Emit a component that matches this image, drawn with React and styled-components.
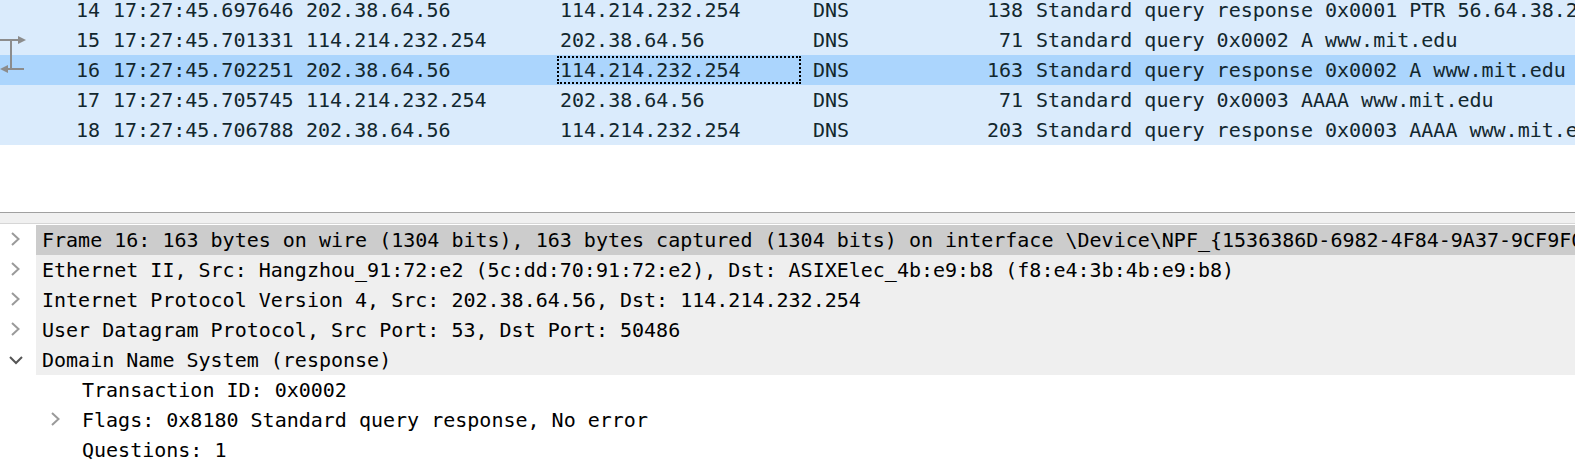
import React from "react";
import styled, { createGlobalStyle } from "styled-components";

const GlobalStyle = createGlobalStyle`
    body {
        margin: 0;
        background: #ffffff;
        font-family: "DejaVu Sans Mono", "Liberation Mono", monospace;
    }
`

const Window = styled.div`
    width: 1575px;
    height: 469px;
    overflow: hidden;
    background: #ffffff;
`

const PacketPane = styled.div`
    height: 212px;
    overflow: hidden;
    background: #ffffff;
`

const PacketScroll = styled.div`
    margin-top: -5px;
`

const PacketRow = styled.div`
    display: flex;
    height: 30px;
    line-height: 30px;
    font-size: 20px;
    color: #12272e;
    white-space: nowrap;
    background: ${p => p.$selected ? "#abd5fd" : "#daebfc"};
`

const Cell = styled.div`
    position: relative;
    flex: ${p => p.$w ? `0 0 ${p.$w}px` : "1 1 auto"};
    box-sizing: border-box;
    padding-left: ${p => p.$pl || 0}px;
    padding-right: ${p => p.$pr || 0}px;
    text-align: ${p => p.$align || "left"};
    overflow: hidden;
    &::after {
        content: "";
        display: ${p => p.$focus ? "block" : "none"};
        position: absolute;
        inset: 1px 2px;
        border: 2px dotted #000000;
    }
`

const NumberCell = styled(Cell)`
    display: flex;
    justify-content: space-between;
`

const Related = styled.svg`
    flex: 0 0 28px;
    height: 30px;
`

const Splitter = styled.div`
    height: 10px;
    background: #f0f0f0;
    border-top: 1px solid #a0a0a0;
    border-bottom: 1px solid #d6d6d6;
`

const Tree = styled.div`
    padding-top: 1px;
    font-size: 20px;
    color: #000000;
`

const TreeRow = styled.div`
    display: flex;
    height: 30px;
    line-height: 30px;
    white-space: nowrap;
    padding-left: ${p => p.$level * 40}px;
`

const Expander = styled.svg`
    flex: 0 0 36px;
    height: 30px;
`

const Label = styled.div`
    flex: 1 1 auto;
    padding-left: 6px;
    overflow: hidden;
    background: ${p => p.$selected ? "#cccccc" : p.$level === 0 ? "#efefef" : "transparent"};
`

const columns = [
    { w: 106, align: "right", pr: 6 },
    { w: 195, pl: 7 },
    { w: 254, pl: 5 },
    { w: 248, pl: 5 },
    { w: 110, pl: 10 },
    { w: 116, align: "right", pr: 6 },
    { pl: 7 },
]

const packets = [
    ["14", "17:27:45.697646", "202.38.64.56", "114.214.232.254", "DNS", "138", "Standard query response 0x0001 PTR 56.64.38.202.in-addr.arpa PTR ns.ustc.edu.cn"],
    ["15", "17:27:45.701331", "114.214.232.254", "202.38.64.56", "DNS", "71", "Standard query 0x0002 A www.mit.edu"],
    ["16", "17:27:45.702251", "202.38.64.56", "114.214.232.254", "DNS", "163", "Standard query response 0x0002 A www.mit.edu CNAME www.mit.edu.edgekey.net"],
    ["17", "17:27:45.705745", "114.214.232.254", "202.38.64.56", "DNS", "71", "Standard query 0x0003 AAAA www.mit.edu"],
    ["18", "17:27:45.706788", "202.38.64.56", "114.214.232.254", "DNS", "203", "Standard query response 0x0003 AAAA www.mit.edu CNAME www.mit.edu.edgekey.net"],
]

const details = [
    { level: 0, state: "closed", selected: true, text: "Frame 16: 163 bytes on wire (1304 bits), 163 bytes captured (1304 bits) on interface \\Device\\NPF_{1536386D-6982-4F84-9A37-9CF9F0E1B2C3}, id 0" },
    { level: 0, state: "closed", text: "Ethernet II, Src: Hangzhou_91:72:e2 (5c:dd:70:91:72:e2), Dst: ASIXElec_4b:e9:b8 (f8:e4:3b:4b:e9:b8)" },
    { level: 0, state: "closed", text: "Internet Protocol Version 4, Src: 202.38.64.56, Dst: 114.214.232.254" },
    { level: 0, state: "closed", text: "User Datagram Protocol, Src Port: 53, Dst Port: 50486" },
    { level: 0, state: "open", text: "Domain Name System (response)" },
    { level: 1, text: "Transaction ID: 0x0002" },
    { level: 1, state: "closed", text: "Flags: 0x8180 Standard query response, No error" },
    { level: 1, text: "Questions: 1" },
]

const RelatedMark = ({ kind }) => {
    if (kind === "request") {
        return (
            <Related viewBox="0 0 28 30">
                <path d="M0 15H20M11 15V30" stroke="#8c8c8c" strokeWidth="2" fill="none" />
                <polygon points="18,11 26,15 18,19" fill="#8c8c8c" />
            </Related>
        )
    }
    if (kind === "response") {
        return (
            <Related viewBox="0 0 28 30">
                <path d="M6 14H24M11 0V14" stroke="#8c8c8c" strokeWidth="2" fill="none" />
                <polygon points="0,14 8,10 8,18" fill="#8c8c8c" />
            </Related>
        )
    }
    return <span />
}

const Chevron = ({ state }) => (
    <Expander viewBox="0 0 36 30">
        {state === "closed" && (
            <polyline points="12,8 18.5,14 12,20" stroke="#9a9a9a" strokeWidth="2" fill="none" />
        )}
        {state === "open" && (
            <polyline points="10,12 16,18 22,12" stroke="#555555" strokeWidth="2" fill="none" />
        )}
    </Expander>
)

const App = () => {
    return (
        <Window>
            <GlobalStyle />
            <PacketPane>
                <PacketScroll>
                    {packets.map((row) => {
                        const selected = row[0] === "16"
                        const kind = row[0] === "15" ? "request" : row[0] === "16" ? "response" : null
                        return (
                            <PacketRow key={row[0]} $selected={selected}>
                                <NumberCell $w={columns[0].w} $pr={columns[0].pr}>
                                    <RelatedMark kind={kind} />
                                    <span>{row[0]}</span>
                                </NumberCell>
                                {row.slice(1).map((value, i) => {
                                    const col = columns[i + 1]
                                    return (
                                        <Cell
                                            key={i}
                                            $w={col.w}
                                            $pl={col.pl}
                                            $pr={col.pr}
                                            $align={col.align}
                                            $focus={selected && i === 2}
                                        >
                                            {value}
                                        </Cell>
                                    )
                                })}
                            </PacketRow>
                        )
                    })}
                </PacketScroll>
            </PacketPane>
            <Splitter />
            <Tree>
                {details.map((item, i) => (
                    <TreeRow key={i} $level={item.level}>
                        <Chevron state={item.state} />
                        <Label $level={item.level} $selected={item.selected}>{item.text}</Label>
                    </TreeRow>
                ))}
            </Tree>
        </Window>
    );
}

export default App;
